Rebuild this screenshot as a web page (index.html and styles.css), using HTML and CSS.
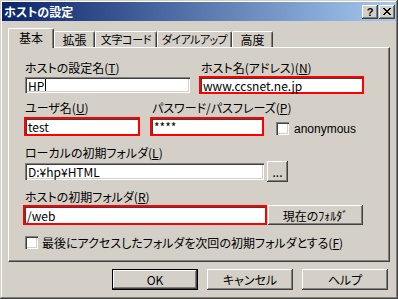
FILE: index.html
```html
<!DOCTYPE html>
<html lang="ja">
<head>
<meta charset="utf-8">
<title>ホストの設定</title>
<link rel="stylesheet" href="styles.css">
</head>
<body>
<div class="window">
  <div class="titlebar">
    <span class="title">ホストの設定</span>
    <div class="tbtns">
      <span class="tbtn q">?</span>
      <span class="tbtn"><svg width="8" height="7" viewBox="0 0 8 7"><path d="M0 0h2v1h1v1h2v-1h1v-1h2v1h-1v1h-1v1h-1v1h1v1h1v1h1v1h-2v-1h-1v-1h-2v1h-1v1h-2v-1h1v-1h1v-1h1v-1h-1v-1h-1v-1h-1z" fill="#000"/></svg></span>
    </div>
  </div>
  <div class="body">
    <div class="tabs">
      <div class="tab sel w1">基本</div>
      <div class="tab w2">拡張</div>
      <div class="tab w3">文字コード</div>
      <div class="tab w4">ダイアルアップ</div>
      <div class="tab w5">高度</div>
    </div>
    <div class="panel">
      <div class="row r1">
        <div class="col c11">
          <div class="lbl">ホストの設定名(<u>T</u>)</div>
          <div class="edit e11">HP<span class="caret"></span></div>
        </div>
        <div class="col c12">
          <div class="lbl pl2">ホスト名(アドレス)(<u>N</u>)</div>
          <div class="hl h12"><div class="inner">www.ccsnet.ne.jp</div></div>
        </div>
      </div>
      <div class="row r2">
        <div class="col c21">
          <div class="lbl pl1">ユーザ名(<u>U</u>)</div>
          <div class="hl h21"><div class="inner">test</div></div>
        </div>
        <div class="col c22">
          <div class="lbl pl2">パスワード/パスフレーズ(<u>P</u>)</div>
          <div class="hl h22"><div class="inner">****</div></div>
        </div>
        <div class="anon">
          <span class="check"></span>
          <span class="latin">anonymous</span>
        </div>
      </div>
      <div class="row r3">
        <div class="col">
          <div class="lbl">ローカルの初期フォルダ(<u>L</u>)</div>
          <div class="line">
            <div class="edit e31">D:¥hp¥HTML</div>
            <div class="btn dots">...</div>
          </div>
        </div>
      </div>
      <div class="row r4">
        <div class="col">
          <div class="lbl">ホストの初期フォルダ(<u>R</u>)</div>
          <div class="line">
            <div class="hl h41"><div class="inner">/web</div></div>
            <div class="btn cur">現在のﾌｫﾙﾀﾞ</div>
          </div>
        </div>
      </div>
      <div class="row r5">
        <span class="check"></span>
        <span>最後にアクセスしたフォルダを次回の初期フォルダとする(<u>F</u>)</span>
      </div>
    </div>
    <div class="buttons">
      <div class="btn bb def">OK</div>
      <div class="btn bb">キャンセル</div>
      <div class="btn bb">ヘルプ</div>
    </div>
  </div>
</div>
</body>
</html>
```

FILE: styles.css
```css
html, body {
  margin: 0;
  padding: 0;
  background: #d4d0c8;
}
body {
  font-family: "Noto Sans CJK JP", sans-serif;
  font-size: 12px;
  font-feature-settings: "palt";
  color: #000;
}
u { text-decoration: underline; text-underline-offset: 1px; }

.window {
  width: 398px;
  height: 299px;
  box-sizing: border-box;
  padding: 2px;
  background: #d4d0c8;
  box-shadow: inset -1px -1px #404040, inset 1px 1px #d4d0c8, inset -2px -2px #808080, inset 2px 2px #ffffff;
  display: flex;
  flex-direction: column;
}

.titlebar {
  height: 19px;
  flex: none;
  background: linear-gradient(to right, #0a246a, #a6caf0);
  display: flex;
  align-items: center;
  justify-content: space-between;
  padding: 0 1px 0 2px;
}
.title {
  color: #fff;
  font-weight: bold;
  font-size: 12px;
  line-height: 19px;
}
.tbtns { display: flex; gap: 0; }
.tbtn {
  width: 16px;
  height: 14px;
  box-sizing: border-box;
  background: #d4d0c8;
  box-shadow: inset -1px -1px #404040, inset 1px 1px #ffffff, inset -2px -2px #808080, inset 2px 2px #d4d0c8;
  display: flex;
  align-items: center;
  justify-content: center;
}
.tbtn.q {
  font-family: "Liberation Sans", sans-serif;
  font-weight: bold;
  font-size: 11px;
  line-height: 14px;
  margin-right: 1px;
}

.body { padding: 0 6px; display: flex; flex-direction: column; }

.tabs {
  height: 26px;
  display: flex;
  align-items: flex-end;
}
.tab {
  height: 16px;
  box-sizing: border-box;
  border-top: 1px solid #fff;
  border-left: 1px solid #fff;
  border-right: 1px solid #404040;
  border-radius: 2px 2px 0 0;
  box-shadow: inset -1px 0 #808080;
  text-align: center;
  line-height: 15px;
  white-space: nowrap;
  background: #d4d0c8;
  overflow: hidden;
}
.tab.sel {
  height: 20px;
  line-height: 18px;
  margin-bottom: -1px;
  position: relative;
  z-index: 1;
}
.w1 { width: 46px; }
.w2 { width: 41px; }
.w3 { width: 62px; font-size: 11px; letter-spacing: -0.3px; }
.w4 { width: 75px; font-size: 11px; letter-spacing: -0.6px; }
.w5 { width: 41px; }

.panel {
  height: 215px;
  box-sizing: border-box;
  border-top: 1px solid #fff;
  border-left: 1px solid #fff;
  border-right: 1px solid #404040;
  border-bottom: 1px solid #404040;
  box-shadow: inset -1px -1px #808080;
  padding: 12px 0 0 16px;
  display: flex;
  flex-direction: column;
}

.row { display: flex; align-items: flex-start; }
.col { display: flex; flex-direction: column; }
.lbl { height: 15px; line-height: 15px; white-space: nowrap; }
.pl1 { padding-left: 1px; }
.pl2 { padding-left: 2px; }

.edit {
  box-sizing: border-box;
  background: #fff;
  box-shadow: inset 1px 1px #808080, inset 2px 2px #404040, inset -1px -1px #ffffff, inset -2px -2px #d4d0c8;
  padding: 0 3px;
  white-space: nowrap;
  display: flex;
  align-items: center;
}
.hl {
  box-sizing: border-box;
  border: 2px solid #ff0000;
  display: flex;
}
.hl .inner {
  flex: 1;
  background: #fff;
  box-shadow: inset 1px 1px #404040;
  padding: 0 2px;
  display: flex;
  align-items: center;
  white-space: nowrap;
}
.caret {
  display: inline-block;
  width: 1px;
  height: 12px;
  background: #000;
  margin-left: 1px;
}

.r1 .c11 { width: 165px; margin-right: 9px; }
.r1 .c11 .lbl { margin-bottom: 2px; }
.e11 { height: 16px; }
.r1 .c12 { width: 165px; }
.r1 .c12 .lbl { margin-bottom: 1px; }
.h12 { height: 18px; }

.r2 { margin-top: 6px; }
.c21 { width: 116px; margin-left: -1px; margin-right: 10px; }
.c21 .lbl, .c22 .lbl { margin-bottom: 2px; }
.c22 { width: 114px; margin-right: 12px; }
.h21, .h22 { height: 19px; }
.anon {
  margin-top: 22px;
  display: flex;
  align-items: center;
  gap: 5px;
  height: 13px;
}
.latin { font-family: "Liberation Sans", sans-serif; font-size: 12px; }

.check {
  width: 13px;
  height: 13px;
  flex: none;
  box-sizing: border-box;
  background: #fff;
  box-shadow: inset 1px 1px #808080, inset 2px 2px #404040, inset -1px -1px #ffffff, inset -2px -2px #d4d0c8;
}

.r3 { margin-top: 9px; }
.line { display: flex; align-items: center; }
.e31 { width: 239px; height: 17px; margin-right: 3px; }
.dots { width: 21px; height: 21px; margin-top: 1px; }

.r4 { margin-top: 7px; }
.r4 .lbl { margin-bottom: 1px; }
.h41 { width: 244px; height: 20px; margin-left: -2px; margin-right: 1px; }
.cur { width: 95px; height: 20px; }

.r5 {
  margin-top: 11px;
  align-items: center;
  gap: 4px;
  height: 13px;
  white-space: nowrap;
}

.btn {
  box-sizing: border-box;
  background: #d4d0c8;
  box-shadow: inset -1px -1px #404040, inset 1px 1px #ffffff, inset -2px -2px #808080, inset 2px 2px #d4d0c8;
  display: flex;
  align-items: center;
  justify-content: center;
  white-space: nowrap;
}
.buttons {
  margin-top: 7px;
  display: flex;
  justify-content: flex-end;
  gap: 9px;
  padding-right: 2px;
}
.bb { width: 86px; height: 21px; }
.bb.def {
  box-shadow: inset 0 0 0 1px #000, inset -2px -2px #404040, inset 2px 2px #ffffff, inset -3px -3px #808080;
}
```
